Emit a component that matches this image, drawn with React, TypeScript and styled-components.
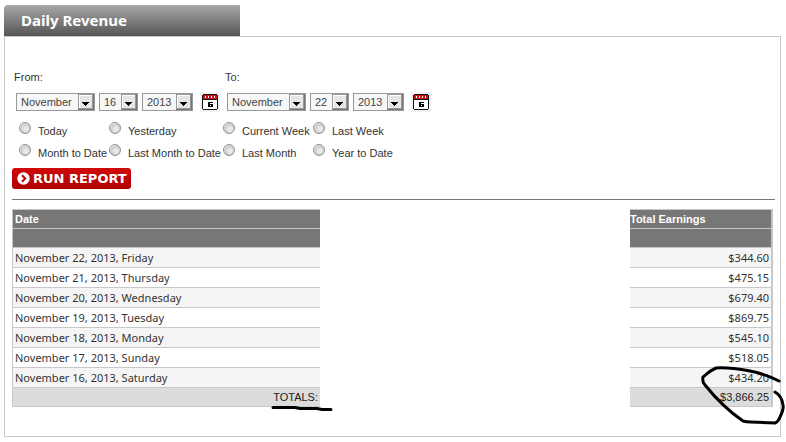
import React from "react";
import styled, { createGlobalStyle } from "styled-components";

const GlobalStyle = createGlobalStyle`
  * { box-sizing: border-box; }
  body {
    margin: 0;
    background: #fff;
    color: #333;
    font-family: "Liberation Sans", Arial, sans-serif;
    font-size: 12px;
  }
`;

const Page = styled.main`
  position: relative;
  padding: 5px 5px 5px 4px;
`;

const TabTitle = styled.h1`
  margin: 0;
  width: 236px;
  height: 31px;
  padding-left: 17px;
  border-top-left-radius: 4px;
  background: linear-gradient(#a8a8a8, #555);
  color: #fff;
  font: bold 15px/30px "Noto Sans", "Lucida Sans", sans-serif;
`;

const Panel = styled.section`
  border: 1px solid #c8c8c8;
  padding: 32px 5px 29px 7px;
`;

const DateFields = styled.div`
  display: flex;
  padding-left: 2px;
`;

const DateGroup = styled.fieldset`
  width: 211px;
  margin: 0;
  padding: 0;
  border: 0;
`;

const GroupLabel = styled.legend`
  padding: 0;
  height: 24px;
  font-size: 11px;
  line-height: 16px;
`;

const Controls = styled.div`
  display: flex;
  align-items: center;
  gap: 4px;
  height: 18px;
  padding-left: 2px;
`;

const SelectBox = styled.span<{ $width: number }>`
  position: relative;
  width: ${(p) => p.$width}px;
  height: 18px;
`;

const Select = styled.select`
  appearance: none;
  display: block;
  width: 100%;
  height: 18px;
  margin: 0;
  padding: 0 0 0 4px;
  border: 1px solid #999;
  border-radius: 0;
  background: #f7f7f7;
  color: #444;
  font: 11px/16px "Liberation Sans", Arial, sans-serif;
`;

const SelectArrow = styled.svg`
  position: absolute;
  top: 1px;
  right: 1px;
  pointer-events: none;
`;

const CalendarButton = styled.button`
  width: 20px;
  height: 20px;
  margin-left: 3px;
  padding: 0;
  border: 0;
  background: #f4f4f4;
  svg { display: block; margin: 0 auto; }
`;

const Presets = styled.div`
  display: grid;
  grid-template-columns: 90px 114px 90px 100px;
  grid-auto-rows: 22px;
  padding: 9px 0 0 7px;
`;

const Preset = styled.label`
  display: flex;
  gap: 7px;
  padding-top: 2px;
  font-size: 11px;
  line-height: 18px;
  white-space: nowrap;
`;

const Radio = styled.input`
  appearance: none;
  flex: none;
  width: 12px;
  height: 12px;
  margin: 0;
  border: 1px solid #909090;
  border-radius: 50%;
  background: radial-gradient(circle at 60% 60%, #e9e9e9 20%, #c9c9c9 60%, #fff 75%);
`;

const RunButton = styled.button`
  display: flex;
  align-items: center;
  gap: 3px;
  height: 21px;
  margin-top: 4px;
  padding: 0 4px 0 5px;
  border: 0;
  border-radius: 3px;
  background: linear-gradient(#d00a0a, #b00000);
  color: #fff;
  font: bold 13px/20px "DejaVu Sans", Verdana, sans-serif;
`;

const Rule = styled.hr`
  margin: 10px 0 9px;
  border: 0;
  border-top: 1px solid #777;
`;

const TableFrame = styled.div`
  padding-right: 2px;
`;

const Table = styled.table`
  width: 100%;
  table-layout: fixed;
  border-collapse: separate;
  border-spacing: 0;
`;

const HeadCell = styled.th<{ $edge: "left" | "right" }>`
  height: 19px;
  padding: 0 0 0 ${(p) => (p.$edge === "left" ? 2 : 0)}px;
  border-bottom: 1px solid #c4c4c4;
  border-${(p) => p.$edge}: ${(p) => (p.$edge === "left" ? 1 : 2)}px solid #c4c4c4;
  background: #777;
  color: #fff;
  font: bold 11px/18px "Liberation Sans", Arial, sans-serif;
  text-align: left;
  tr:first-child > & { height: 20px; border-top: 1px solid #c4c4c4; }
`;

const Cell = styled.td<{ $edge: "left" | "right" }>`
  height: 20px;
  padding: 0 2px;
  border-bottom: 1px solid #c8c8c8;
  border-${(p) => p.$edge}: ${(p) => (p.$edge === "left" ? 1 : 2)}px solid #c8c8c8;
  font: 11px/19px "Noto Sans", "Lucida Sans", sans-serif;
  text-align: ${(p) => p.$edge};
  tr:nth-child(odd) > & { background: #f5f5f5; }
`;

const TotalCell = styled.td<{ $edge: "left" | "right" }>`
  height: 19px;
  padding: 0 2px;
  border-bottom: 1px solid #c8c8c8;
  border-${(p) => p.$edge}: ${(p) => (p.$edge === "left" ? 1 : 2)}px solid #c8c8c8;
  background: #dcdcdc;
  color: #222;
  font: 11px/18px "Liberation Sans", Arial, sans-serif;
  text-align: right;
`;

const Gap = styled.td`
  padding: 0;
`;

const Ink = styled.svg`
  position: absolute;
  fill: none;
  stroke: #000;
  stroke-width: 3;
  stroke-linecap: round;
  stroke-linejoin: round;
  pointer-events: none;
`;

const CircleInk = styled(Ink)`
  right: 0;
  bottom: 15px;
`;

const UnderlineInk = styled(Ink)`
  left: 270px;
  bottom: 30px;
`;

const months = ["January", "February", "March", "April", "May", "June", "July", "August", "September", "October", "November", "December"];
const days = Array.from({ length: 31 }, (_, i) => String(i + 1));
const years = ["2011", "2012", "2013", "2014"];
const presets = ["Today", "Yesterday", "Current Week", "Last Week", "Month to Date", "Last Month to Date", "Last Month", "Year to Date"];
const rows = [
  ["November 22, 2013, Friday", "$344.60"],
  ["November 21, 2013, Thursday", "$475.15"],
  ["November 20, 2013, Wednesday", "$679.40"],
  ["November 19, 2013, Tuesday", "$869.75"],
  ["November 18, 2013, Monday", "$545.10"],
  ["November 17, 2013, Sunday", "$518.05"],
  ["November 16, 2013, Saturday", "$434.20"],
];

function DropDown({ label, value, options, width }: { label: string; value: string; options: string[]; width: number }) {
  return (
    <SelectBox $width={width}>
      <Select aria-label={label} defaultValue={value}>
        {options.map((o) => <option key={o}>{o}</option>)}
      </Select>
      <SelectArrow width="16" height="16" viewBox="0 0 16 16" aria-hidden="true">
        <path d="M0 0h16v16H0z" fill="#777" />
        <path d="M0 0h15v15H0z" fill="#999" />
        <path d="M1 1h13v13H1z" fill="#fff" />
        <path d="M2 2h12v12H2z" fill="#e6e6e6" />
        <path d="M4 8h7v1h-1v1H9v1H8v1H7v-1H6v-1H5V9H4z" fill="#000" />
      </SelectArrow>
    </SelectBox>
  );
}

function CalendarIcon() {
  return (
    <svg width="18" height="18" viewBox="0 0 18 18" shapeRendering="crispEdges" aria-hidden="true">
      <path d="M2 1h14v1h1v14h-1v1H2v-1H1V2h1z" fill="#111" />
      <path d="M2 2h14v4H2z" fill="#c81414" />
      <path d="M2 7h14v9H2z" fill="#fff" />
      <path d="M4 3h1v2H4zM7 3h1v2H7zM10 3h1v2h-1zM13 3h1v2h-1z" fill="#fff" />
      <path d="M7 9h5v1H9v1h3v3H7zM9 12v1h1v-1z" fill="#000" fillRule="evenodd" />
    </svg>
  );
}

function DatePicker({ label, day }: { label: string; day: string }) {
  return (
    <DateGroup>
      <GroupLabel>{label}:</GroupLabel>
      <Controls>
        <DropDown label={`${label} month`} value="November" options={months} width={79} />
        <DropDown label={`${label} day`} value={day} options={days} width={39} />
        <DropDown label={`${label} year`} value="2013" options={years} width={51} />
        <CalendarButton type="button" aria-label={`${label} calendar`}><CalendarIcon /></CalendarButton>
      </Controls>
    </DateGroup>
  );
}

export default function App() {
  return (
    <Page>
      <GlobalStyle />
      <TabTitle>Daily Revenue</TabTitle>
      <Panel>
        <DateFields>
          <DatePicker label="From" day="16" />
          <DatePicker label="To" day="22" />
        </DateFields>
        <Presets>
          {presets.map((p) => (
            <Preset key={p}><Radio type="radio" name="preset" />{p}</Preset>
          ))}
        </Presets>
        <RunButton type="button">
          <svg width="13" height="13" viewBox="0 0 13 13" aria-hidden="true">
            <circle cx="6.5" cy="6.5" r="6.2" fill="#fff" />
            <path d="M5 3.3l3.2 3.2L5 9.7" fill="none" stroke="#c00000" strokeWidth="2" />
          </svg>
          RUN REPORT
        </RunButton>
        <Rule />
        <TableFrame>
          <Table>
            <colgroup>
              <col width="308" />
              <col />
              <col width="143" />
            </colgroup>
            <thead>
              <tr><HeadCell $edge="left">Date</HeadCell><Gap /><HeadCell $edge="right">Total Earnings</HeadCell></tr>
              <tr><HeadCell $edge="left" /><Gap /><HeadCell $edge="right" /></tr>
            </thead>
            <tbody>
              {rows.map(([date, amount]) => (
                <tr key={date}><Cell $edge="left">{date}</Cell><Gap /><Cell $edge="right">{amount}</Cell></tr>
              ))}
            </tbody>
            <tfoot>
              <tr><TotalCell $edge="left">TOTALS:</TotalCell><Gap /><TotalCell $edge="right">$3,866.25</TotalCell></tr>
            </tfoot>
          </Table>
        </TableFrame>
      </Panel>
      <CircleInk width="86" height="62" viewBox="700 365 86 62" aria-hidden="true">
        <path d="M779 381C769 376 761 373 750 371C739 369 726 367 716 368Q709 371 703 377Q702 382 705 385C713 395 727 410 743 421Q746 422 751 422L775 423Q778 422 780 417Q784 409 783 405Q782 396 775 392" />
      </CircleInk>
      <UnderlineInk width="66" height="8" viewBox="270 404 66 8" aria-hidden="true">
        <path d="M273 407.500H295L300 408.500H317L322 409.500H331" />
      </UnderlineInk>
    </Page>
  );
}
